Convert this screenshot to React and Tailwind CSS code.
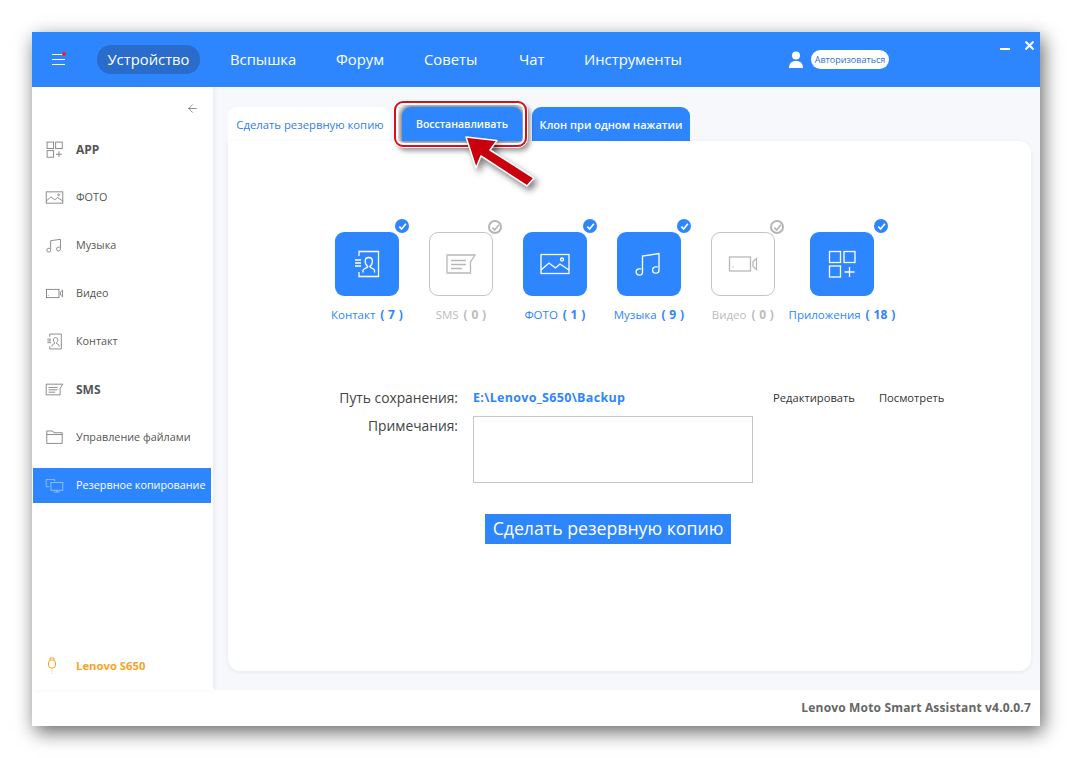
import React from "react";
import { ArrowLeft } from "lucide-react";

const Svg = ({ size = 32, sw = 1.5, children }) => (
  <svg width={size} height={size} viewBox="0 0 32 32" fill="none" stroke="currentColor" strokeWidth={sw}>
    {children}
  </svg>
);
const AppsIcon = (p) => (
  <Svg {...p}>
    <rect x="3.5" y="3.5" width="11" height="11" />
    <rect x="18" y="3.5" width="11" height="11" />
    <rect x="3.5" y="18" width="11" height="11" />
    <path d="M23.5 19v10M18.5 24h10" />
  </Svg>
);
const PhotoIcon = (p) => (
  <Svg {...p}>
    <rect x="2" y="6.5" width="28" height="19" />
    <path d="M2 22l8-7 6.5 5 4.5-4 9 6" />
    <circle cx="23" cy="11.5" r="1.5" />
  </Svg>
);
const MusicIcon = (p) => (
  <Svg {...p}>
    <path d="M9.5 24V8L26 5.5V22" />
    <path d="M9.5 24a3.2 3.2 0 1 1-3.2-3.2h2M26 22a3.2 3.2 0 1 1-3.2-3.2h2" />
  </Svg>
);
const VideoIcon = (p) => (
  <Svg {...p}>
    <rect x="2.5" y="9" width="21" height="14" />
    <path d="M26 13.5l3.5-3v11l-3.5-3z" />
    <path d="M6 18.5v1" />
  </Svg>
);
const ContactIcon = (p) => (
  <Svg {...p}>
    <path d="M8 8V3.5h19.5v25H8V24" />
    <path d="M4 12h6M4 15h6M4 18h6" />
    <path d="M12 24.5v-2.2c0-1.7 4.300-2 4.800-3.800-1.800-1.200-2.600-3-2.600-5.200 0-2.300 1.500-3.800 3.600-3.800s3.600 1.500 3.600 3.800c0 2.200-.800 4-2.600 5.200.500 1.800 4.700 2.100 4.700 3.800v2.200" />
  </Svg>
);
const SmsIcon = (p) => (
  <Svg {...p}>
    <path d="M2 7h28l-4.500 7v11H2z" />
    <path d="M6 12.500h15M6 16.500h15M6 20.500h11" />
  </Svg>
);
const FolderIcon = (p) => (
  <Svg {...p}>
    <path d="M3 26V5h10l2 3h14v18zM3 11h26" />
  </Svg>
);
const BackupIcon = (p) => (
  <Svg {...p}>
    <rect x="10" y="11" width="20" height="13" />
    <path d="M20 24v3M15 27h10M7 18H2V6h14v3" />
  </Svg>
);

const sideItems = [
  { Icon: AppsIcon, label: "APP", bold: true },
  { Icon: PhotoIcon, label: "ФОТО" },
  { Icon: MusicIcon, label: "Музыка" },
  { Icon: VideoIcon, label: "Видео" },
  { Icon: ContactIcon, label: "Контакт" },
  { Icon: SmsIcon, label: "SMS", bold: true },
  { Icon: FolderIcon, label: "Управление файлами" },
  { Icon: BackupIcon, label: "Резервное копирование", active: true },
];

const tiles = [
  { Icon: ContactIcon, label: "Контакт", n: "( 7 )", on: true },
  { Icon: SmsIcon, label: "SMS", n: "( 0 )" },
  { Icon: PhotoIcon, label: "ФОТО", n: "( 1 )", on: true },
  { Icon: MusicIcon, label: "Музыка", n: "( 9 )", on: true },
  { Icon: VideoIcon, label: "Видео", n: "( 0 )" },
  { Icon: AppsIcon, label: "Приложения", n: "( 18 )", on: true, last: true },
];

function Tile({ Icon, label, n, on, last }) {
  return (
    <div className={`flex w-16 flex-col items-center ${last ? "ml-[5px]" : ""}`}>
      <div
        className={`relative flex h-16 w-16 items-center justify-center rounded-[9px] ${
          on ? "bg-[#2e86fe] text-white" : "border-[1.5px] border-[#c4c4c4] bg-white text-[#b8b8b8]"
        }`}
      >
        <Icon size={32} sw={1.3} />
        <span
          className={`absolute -top-[13px] flex h-[14px] w-[14px] items-center justify-center rounded-full ${
            last ? "-right-[14px]" : "-right-[10px]"
          } ${on ? "bg-[#2e86fe]" : "border-2 border-[#b5b5b5] bg-white"}`}
        >
          <svg width="9" height="9" viewBox="0 0 10 10" fill="none" stroke={on ? "#fff" : "#b5b5b5"} strokeWidth="1.8">
            <path d="M1.500 5.200L4 7.800 8.800 2" />
          </svg>
        </span>
      </div>
      <div
        className={`mt-[12px] flex h-[14px] items-center gap-[5px] whitespace-nowrap text-[11.500px] font-medium leading-[14px] ${
          on ? "text-[#2e86fe]" : "text-[#bcbcbc]"
        }`}
      >
        <span>{label}</span>
        <span className="text-[12px] font-bold tracking-[0.3px]">{n}</span>
      </div>
    </div>
  );
}

export default function App() {
  return (
    <div className="relative h-[758px] w-[1072px] overflow-hidden bg-white pl-8 pt-8 font-['Open_Sans','Noto_Sans',sans-serif]">
      <div className="flex h-[694px] w-[1008px] flex-col bg-white shadow-[3px_6px_18px_rgba(0,0,0,0.6)]">
        {/* Title bar */}
        <header className="relative flex h-[55px] shrink-0 items-center bg-[#2e86fe] text-white">
          <div className="relative ml-5 flex h-[11px] w-[13px] flex-col justify-between">
            <span className="h-px w-[13px] bg-white" />
            <span className="h-px w-[13px] bg-white" />
            <span className="h-px w-[13px] bg-white" />
            <span className="absolute -right-px -top-[2px] h-[4px] w-[4px] rounded-full bg-[#e8232e]" />
          </div>
          <nav className="ml-[32px] flex items-center text-[14.800px] font-medium leading-5">
            <span className="flex h-[29px] w-[103px] items-center justify-center rounded-[14px] bg-[#2a6ccb] pb-[2px]">Устройство</span>
            <span className="ml-[30px] w-[66px] pb-[2px]">Вспышка</span>
            <span className="ml-[40px] w-[57px] pb-[2px]">Форум</span>
            <span className="ml-[31px] w-[55px] pb-[2px]">Советы</span>
            <span className="ml-[40px] w-[25px] pb-[2px]">Чат</span>
            <span className="ml-[40px] pb-[2px]">Инструменты</span>
          </nav>
          <svg className="ml-auto" width="16" height="17" viewBox="0 0 16 17" fill="#fff">
            <circle cx="8" cy="4.500" r="4" />
            <path d="M1 17c0-4.500 2.500-7 7-7s7 2.500 7 7z" />
          </svg>
          <div className="ml-[7px] mr-[151px] flex h-[19px] w-[78px] items-center justify-center rounded-full bg-white text-[9px] font-medium text-[#2e6fd6]">
            Авторизоваться
          </div>
          <span className="absolute right-[30px] top-[16px] h-[2px] w-[10px] bg-white" />
          <svg className="absolute right-[6px] top-[9px]" width="9" height="9" viewBox="0 0 9 9" stroke="#fff" strokeWidth="2">
            <path d="M0.500 0.500l8 8M8.500 0.500l-8 8" />
          </svg>
        </header>

        <div className="flex h-[603px] shrink-0">
          {/* Sidebar */}
          <aside className="relative z-10 flex w-[181px] shrink-0 flex-col bg-white shadow-[2px_0_4px_rgba(0,0,0,0.05)]">
            <div className="flex h-[45px] items-center justify-end pb-[3px] pr-[14px] text-[#555]">
              <ArrowLeft size={13} strokeWidth={1.2} />
            </div>
            <div className="flex flex-col gap-[13px] px-px">
              {sideItems.map(({ Icon, label, bold, active }) => (
                <div
                  key={label}
                  className={`flex h-[35px] w-[178px] items-center pl-[12px] ${
                    active ? "bg-[#2e86fe] text-white" : "text-[#555]"
                  } ${bold ? "text-[12px] font-bold" : "text-[10.800px]"}`}
                >
                  <span className={active ? "flex text-[#9fc5f7]" : "flex text-[#777]"}>
                    <Icon size={19} sw={1.4} />
                  </span>
                  <span className="ml-[12px] whitespace-nowrap">{label}</span>
                </div>
              ))}
            </div>
            <div className="mb-[15px] mt-auto flex items-center pl-[14px] text-[#f9a326]">
              <svg width="12" height="18" viewBox="0 0 12 18" fill="none" stroke="currentColor" strokeWidth="1">
                <rect x="2.500" y="3" width="7" height="8" rx="3" />
                <path d="M4 3V1h4v2" />
                <path d="M6 11v6" strokeDasharray="1.500 1" opacity="0.5" />
              </svg>
              <span className="ml-[18px] text-[11.300px] font-bold">Lenovo S650</span>
            </div>
          </aside>

          {/* Content */}
          <main className="flex min-w-0 flex-1 flex-col bg-[#f6f8fb] pb-[19px] pl-[15px] pr-[9px] pt-[20px]">
            <div className="flex h-[34px] shrink-0 text-[11px]">
              <div className="flex w-[162px] items-center justify-center rounded-t-[9px] bg-white pl-[2px] pt-[2px] text-[11.300px] font-medium text-[#2e7fe8]">
                Сделать резервную копию
              </div>
              <div className="relative ml-[12px] flex w-[120px] items-center justify-center rounded-t-[9px] bg-[#2e86fe] pt-[2px] text-[10.500px] font-semibold text-white shadow-[0_0_5px_2px_rgba(60,60,60,0.7)]">
                Восстанавливать
                <span className="absolute -bottom-[6px] -left-[8px] -right-[5px] -top-[6px] rounded-[9px] border-2 border-[#d5101c] shadow-[0_0_0_1px_#fff,inset_0_0_0_2px_#fff,3px_4px_5px_rgba(0,0,0,0.4)]" />
              </div>
              <div className="ml-[10px] flex w-[158px] items-center justify-center rounded-t-[9px] bg-[#2e86fe] pt-[2px] font-semibold text-white">
                Клон при одном нажатии
              </div>
            </div>
            <section className="flex-1 rounded-b-[12px] rounded-tr-[12px] bg-white pt-[91px] shadow-[0_1px_4px_rgba(0,0,0,0.07)]">
              <div className="ml-[107px] flex gap-[30px]">
                {tiles.map((t) => (
                  <Tile key={t.label} {...t} />
                ))}
              </div>
              <div className="mt-[67px] grid grid-cols-[230px_280px_auto] gap-x-[15px] text-[13.800px] text-[#444]">
                <div className="flex h-[18px] items-center justify-end">Путь сохранения:</div>
                <div className="col-span-2 flex h-[18px] items-center text-[12.500px] font-bold tracking-[0.3px] text-[#2e86fe]">
                  <span className="w-[300px]">E:\Lenovo_S650\Backup</span>
                  <span className="text-[11.200px] font-normal tracking-normal text-[#333]">Редактировать</span>
                  <span className="ml-[24px] text-[11.200px] font-normal tracking-normal text-[#333]">Посмотреть</span>
                </div>
                <div className="mt-[10px] flex h-[18px] items-center justify-end">Примечания:</div>
                <div className="mt-[9px] h-[67px] border border-[#c6c6c6] bg-white" />
              </div>
              <button className="ml-[257px] mt-[31px] flex h-[30px] w-[246px] items-center justify-center bg-[#2e86fe] text-[17.700px] leading-none text-white">
                Сделать резервную копию
              </button>
            </section>
          </main>
        </div>

        <footer className="flex flex-1 items-center justify-end bg-white pr-[9px] text-[12px] font-bold tracking-[0.17px] text-[#666]">
          Lenovo Moto Smart Assistant v4.0.0.7
        </footer>
      </div>

      {/* Annotation arrow */}
      <svg className="absolute left-0 top-0 drop-shadow-[3px_4px_3px_rgba(0,0,0,0.5)]" width="1072" height="758" fill="none">
        <path d="M466 137L497 140.500L490 150L534 178L527 186L481 156L476 168Z" fill="#c9000e" stroke="#fff" strokeWidth="1.500" strokeLinejoin="round" />
      </svg>
    </div>
  );
}
